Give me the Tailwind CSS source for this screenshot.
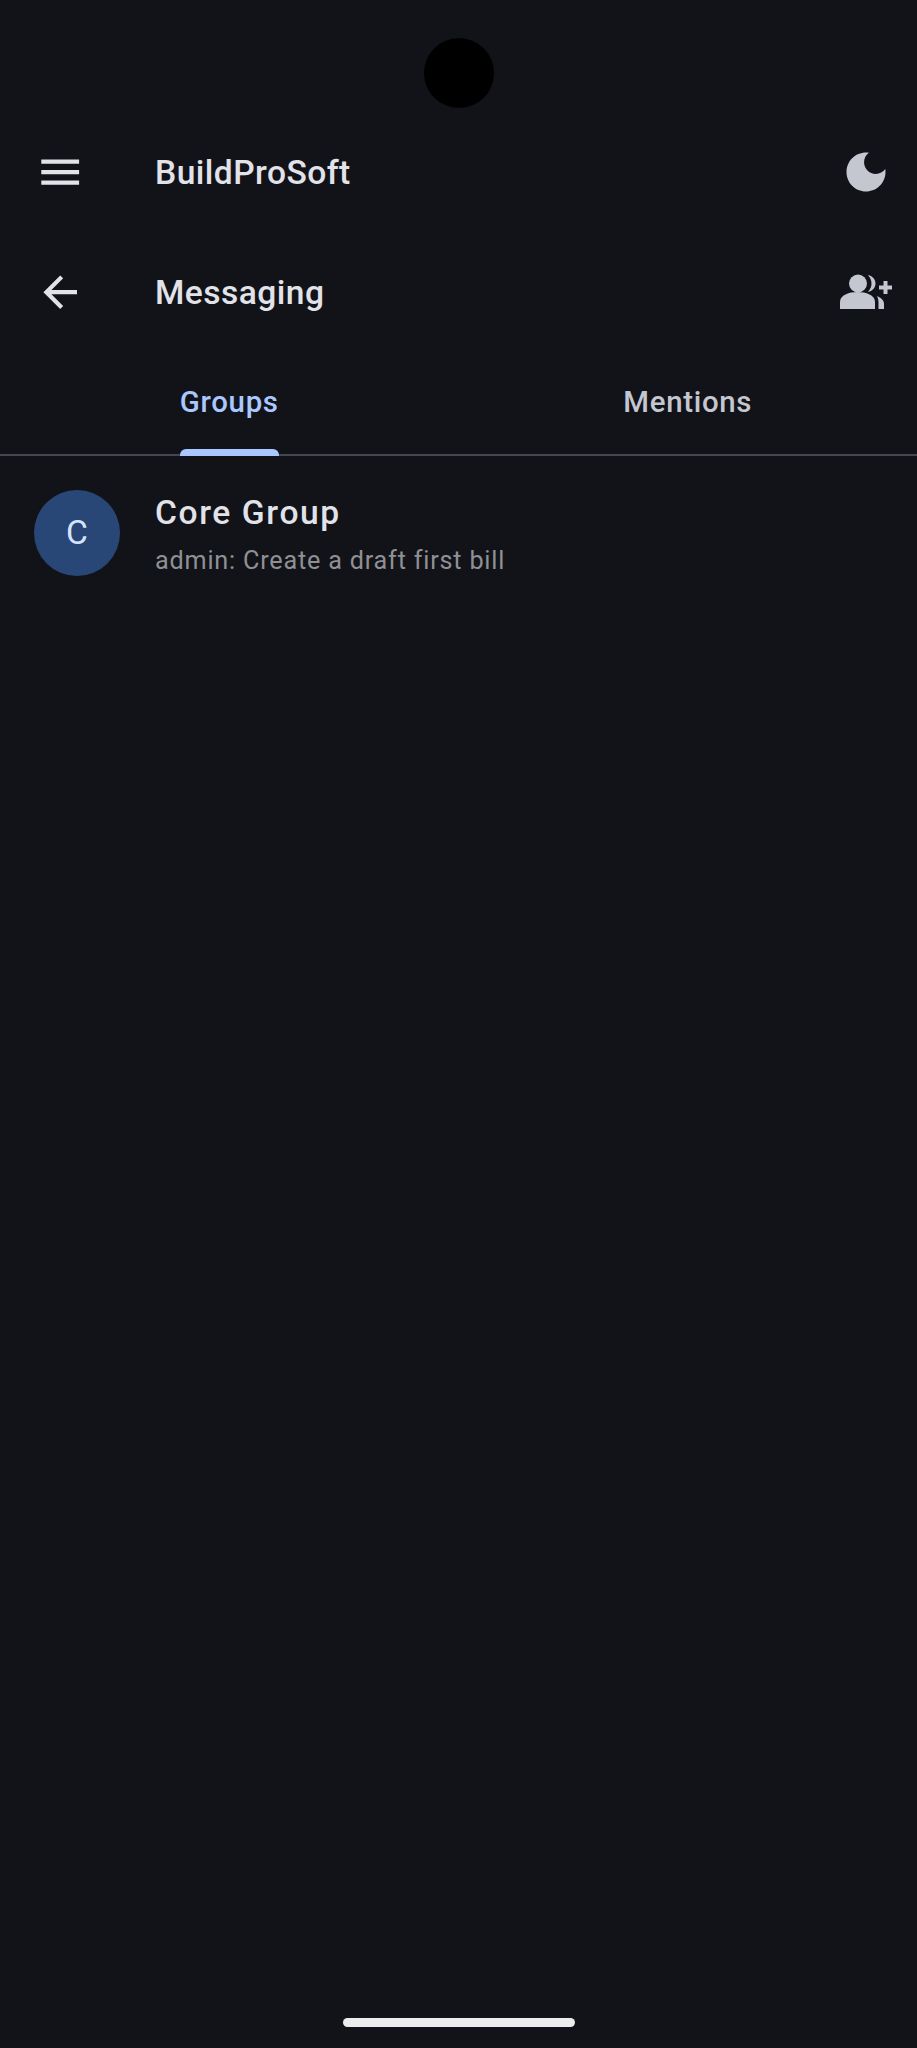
<!DOCTYPE html>
<html lang="en">
<head>
  <meta charset="UTF-8" />
  <meta name="viewport" content="width=device-width, initial-scale=1" />
  <title>BuildProSoft - Messaging</title>
  <script src="https://cdn.jsdelivr.net/npm/@tailwindcss/browser@4"></script>
</head>
<body class="bg-[#111318] text-[#e2e2e9] font-['Roboto',sans-serif]">
  <div class="relative w-[917px] h-[2048px] overflow-hidden pt-[112px]">

    <!-- camera cutout -->
    <div class="absolute left-[424px] top-[38px] w-[70px] h-[70px] rounded-full bg-black"></div>

    <!-- app bar -->
    <header class="flex items-center h-[120px] pl-[35px] pr-[25px]">
      <svg class="w-[50.4px] h-[50.4px] shrink-0" viewBox="0 0 24 24" fill="#e2e2e9"><path d="M3 18h18v-2H3v2zm0-5h18v-2H3v2zm0-7v2h18V6H3z"/></svg>
      <h1 class="ml-[69.6px] pt-[2px] text-[33.6px] font-medium leading-none tracking-[0.45px]">BuildProSoft</h1>
      <svg class="ml-auto mr-[-0.4px] w-[52px] h-[52px] shrink-0" viewBox="0 0 24 24" fill="#c4c6d0"><path d="M12 3c-4.97 0-9 4.03-9 9s4.03 9 9 9 9-4.03 9-9c0-.46-.04-.92-.1-1.36-.98 1.37-2.58 2.26-4.4 2.26-2.98 0-5.4-2.42-5.4-5.4 0-1.81.89-3.42 2.26-4.4-.44-.06-.9-.1-1.36-.1z"/></svg>
    </header>

    <!-- page bar -->
    <div class="flex items-center h-[120px] pl-[35px] pr-[25px]">
      <svg class="w-[50.4px] h-[50.4px] shrink-0" viewBox="0 0 24 24" fill="#e2e2e9"><path d="M20 11H7.83l5.59-5.59L12 4l-8 8 8 8 1.41-1.41L7.83 13H20v-2z"/></svg>
      <h2 class="ml-[69.6px] pt-[2px] text-[33.6px] font-medium leading-none tracking-[0.45px]">Messaging</h2>
      <svg class="ml-auto w-[52px] h-[36px] shrink-0" viewBox="0 0 52 36" fill="#c4c6d0">
        <circle cx="18" cy="9.5" r="9"/>
        <path d="M0 35V28C0 21 9 18 17.500 18S35 21 35 28V35Z"/>
        <path d="M28 1C33 2 35.500 6 35.500 9.500S33 17 28 18C30.500 15 31.500 12.500 31.500 9.500S30.500 4 28 1Z"/>
        <path d="M37 22C41 24 44 26 44 30V35H38.500V29C38.500 26 38 24 37 22Z"/>
        <path d="M39 11.500h4.500V7h4v4.500H52v4h-4.500V20h-4v-4.500H39z"/>
      </svg>
    </div>

    <!-- tabs -->
    <nav class="flex h-[104px] border-b-2 border-[#44474e]">
      <div class="w-1/2 flex flex-col items-center">
        <div class="flex flex-col items-stretch h-[104px] shrink-0">
          <span class="flex-1 flex items-center justify-center pt-[4px] text-[29.4px] font-medium leading-none tracking-[0.7px] text-[#aac7ff]">Groups</span>
          <span class="h-[7px] rounded-t-[6px] bg-[#aac7ff]"></span>
        </div>
      </div>
      <div class="w-1/2 flex flex-col items-center">
        <span class="h-[97px] flex items-center justify-center pt-[4px] text-[29.4px] font-medium leading-none tracking-[0.7px] text-[#c4c6d0]">Mentions</span>
      </div>
    </nav>

    <!-- group list -->
    <ul>
      <li class="flex items-start pt-[34px] pl-[34px]">
        <div class="w-[86px] h-[86px] rounded-full bg-[#284777] text-[#d6e3ff] text-[33.6px] flex items-center justify-center shrink-0">C</div>
        <div class="ml-[35px] pt-[1px]">
          <p class="text-[33.6px] font-medium leading-[44px] tracking-[1.6px]">Core Group</p>
          <p class="mt-[8px] text-[25.2px] leading-[36px] tracking-[0.8px] text-[#909094]">admin: Create a draft first bill</p>
        </div>
      </li>
    </ul>

    <!-- home indicator -->
    <div class="absolute left-[343px] top-[2018px] w-[232px] h-[9px] rounded-full bg-[#ececec]"></div>
  </div>
</body>
</html>
